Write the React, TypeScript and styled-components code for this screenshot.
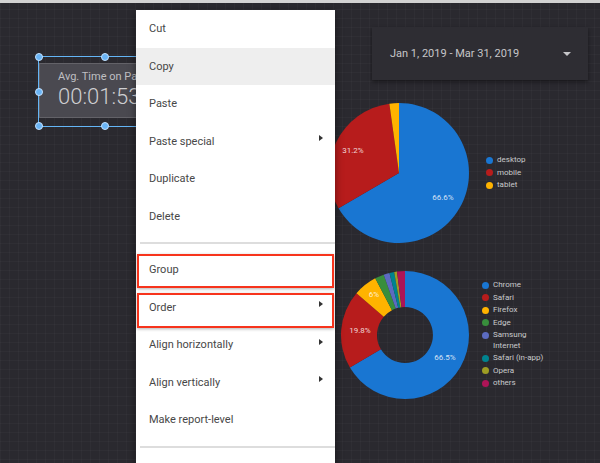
import styled, { createGlobalStyle } from "styled-components";

const GlobalStyle = createGlobalStyle`
  html, body {
    margin: 0;
    padding: 0;
    background: #2a292f;
  }
  body {
    font-family: Roboto, "Liberation Sans", Arial, sans-serif;
  }
  * {
    box-sizing: border-box;
  }
`;

type Slice = { label: string; value: number; color: string };
type ChartLabel = { text: string; x: number; y: number };

const devices: Slice[] = [
  { label: "desktop", value: 66.6, color: "#1976d2" },
  { label: "mobile", value: 31.2, color: "#b71c1c" },
  { label: "tablet", value: 2.2, color: "#ffb300" },
];

const browsers: Slice[] = [
  { label: "Chrome", value: 66.5, color: "#1976d2" },
  { label: "Safari", value: 19.8, color: "#b71c1c" },
  { label: "Firefox", value: 6, color: "#ffb300" },
  { label: "Edge", value: 2.3, color: "#388e3c" },
  { label: "Samsung\nInternet", value: 1.5, color: "#5c6bc0" },
  { label: "Safari (in-app)", value: 1.2, color: "#00838f" },
  { label: "Opera", value: 0.7, color: "#9e9d24" },
  { label: "others", value: 2.0, color: "#ad1457" },
];

const menuItems = [
  { label: "Cut" },
  { label: "Copy", active: true },
  { label: "Paste" },
  { label: "Paste special", sub: true },
  { label: "Duplicate" },
  { label: "Delete" },
  { divider: true },
  { label: "Group", mark: [3, 1] },
  { label: "Order", sub: true, mark: [4, -2] },
  { label: "Align horizontally", sub: true },
  { label: "Align vertically", sub: true },
  { label: "Make report-level" },
  { divider: true },
  { label: "" },
];

const Page = styled.div`
  position: relative;
  width: 600px;
  height: 463px;
  overflow: hidden;
  background-color: #2a292f;
  background-image: linear-gradient(rgba(255, 255, 255, 0.025) 1px, transparent 1px),
    linear-gradient(90deg, rgba(255, 255, 255, 0.025) 1px, transparent 1px);
  background-size: 9px 9px;
`;

const TopStrip = styled.div`
  height: 3px;
  background: #d3d3d3;
`;

/* report widgets sit on the free canvas */
const Selection = styled.div`
  position: absolute;
  left: 38px;
  top: 56px;
  width: 134px;
  height: 71px;
  border: 1px solid #64b5f6;
  padding: 6px 0 8px 0;
`;

const Handle = styled.span<{ $x: string; $y: string }>`
  position: absolute;
  left: ${(p) => p.$x};
  top: ${(p) => p.$y};
  width: 8px;
  height: 8px;
  margin: -4px 0 0 -4px;
  border-radius: 50%;
  background: #6ab4f5;
  border: 1px solid #c4e2ff;
`;

const Scorecard = styled.div`
  height: 100%;
  background: #4a4950;
  border: 1px solid rgba(255, 255, 255, 0.14);
  padding: 6px 0 0 18px;
  overflow: hidden;
  white-space: nowrap;
`;

const ScoreTitle = styled.div`
  font-size: 11px;
  line-height: 14px;
  color: #bfbfc2;
`;

const ScoreValue = styled.div`
  font-size: 22px;
  line-height: 26px;
  font-weight: 300;
  color: #cfcfd2;
`;

const DateControl = styled.div`
  position: absolute;
  left: 372px;
  top: 27px;
  width: 216px;
  height: 53px;
  background: #2e2d33;
  box-shadow: 0 2px 4px rgba(0, 0, 0, 0.45);
  display: flex;
  align-items: center;
  justify-content: space-between;
  padding: 0 17px 0 18px;
  font-size: 11px;
  color: #c6c6c9;
`;

const Caret = styled.span`
  width: 0;
  height: 0;
  border-left: 4px solid transparent;
  border-right: 4px solid transparent;
  border-top: 4px solid #c6c6c9;
`;

const ChartWidget = styled.div<{ $x: number; $y: number; $gap: number }>`
  position: absolute;
  left: ${(p) => p.$x}px;
  top: ${(p) => p.$y}px;
  display: flex;
  align-items: flex-start;
  gap: ${(p) => p.$gap}px;
`;

const Legend = styled.ul<{ $top: number }>`
  list-style: none;
  margin: ${(p) => p.$top}px 0 0 0;
  padding: 0;
  display: flex;
  flex-direction: column;
  gap: 2px;
`;

const LegendRow = styled.li`
  display: flex;
  align-items: flex-start;
  gap: 4px;
  font-size: 8px;
  line-height: 10.5px;
  color: #c9c9cc;
  white-space: pre-line;
`;

const Dot = styled.span<{ $color: string }>`
  flex: none;
  width: 7px;
  height: 7px;
  margin-top: 1.75px;
  border-radius: 50%;
  background: ${(p) => p.$color};
`;

const Menu = styled.div`
  position: absolute;
  left: 136px;
  top: 10px;
  width: 199px;
  bottom: -20px;
  background: #fff;
  box-shadow: 0 2px 8px rgba(0, 0, 0, 0.45);
  display: flex;
  flex-direction: column;
`;

const MenuItem = styled.div<{ $active?: boolean; $mark?: number[] }>`
  position: relative;
  flex: none;
  height: 37.5px;
  display: flex;
  align-items: center;
  padding: 0 12px 0 13px;
  font-size: 11px;
  color: #474747;
  background: ${(p) => (p.$active ? "#eeeeee" : "transparent")};

  &::after {
    content: "";
    display: ${(p) => (p.$mark ? "block" : "none")};
    position: absolute;
    left: 1px;
    right: 1px;
    top: ${(p) => (p.$mark ? p.$mark[0] : 0)}px;
    bottom: ${(p) => (p.$mark ? p.$mark[1] : 0)}px;
    border: 2px solid #f7341c;
    box-shadow: 0 1px 3px rgba(0, 0, 0, 0.3);
  }
`;

const SubArrow = styled.span`
  margin: -6px 0 0 auto;
  width: 0;
  height: 0;
  border-top: 3px solid transparent;
  border-bottom: 3px solid transparent;
  border-left: 4px solid #333;
`;

const MenuDivider = styled.div`
  flex: none;
  height: 16px;
  display: flex;
  align-items: center;
  padding-left: 4px;

  &::before {
    content: "";
    flex: 1;
    height: 2px;
    background: #dddddd;
  }
`;

function point(cx: number, cy: number, r: number, t: number) {
  const a = t * Math.PI * 2;
  return [cx + r * Math.sin(a), cy - r * Math.cos(a)];
}

function slicePath(c: number, r: number, r0: number, t0: number, t1: number) {
  const large = t1 - t0 > 0.5 ? 1 : 0;
  const [x0, y0] = point(c, c, r, t0);
  const [x1, y1] = point(c, c, r, t1);
  if (!r0) {
    return `M${c} ${c} L${x0} ${y0} A${r} ${r} 0 ${large} 1 ${x1} ${y1} Z`;
  }
  const [ix1, iy1] = point(c, c, r0, t1);
  const [ix0, iy0] = point(c, c, r0, t0);
  return `M${x0} ${y0} A${r} ${r} 0 ${large} 1 ${x1} ${y1} L${ix1} ${iy1} A${r0} ${r0} 0 ${large} 0 ${ix0} ${iy0} Z`;
}

function Pie({ size, hole, slices, labels }: { size: number; hole: number; slices: Slice[]; labels: ChartLabel[] }) {
  const c = size / 2;
  let t = 0;
  return (
    <svg width={size} height={size} viewBox={`0 0 ${size} ${size}`}>
      {slices.map((s) => {
        const t0 = t;
        t += s.value / 100;
        return <path key={s.label} d={slicePath(c, c, hole, t0, t)} fill={s.color} />;
      })}
      {labels.map((l) => (
        <text
          key={l.text}
          x={l.x}
          y={l.y}
          textAnchor="middle"
          dominantBaseline="middle"
          fontSize="8"
          fontFamily="Roboto, sans-serif"
          fill="rgba(255,255,255,0.82)"
        >
          {l.text}
        </text>
      ))}
    </svg>
  );
}

function ChartLegend({ slices, top }: { slices: Slice[]; top: number }) {
  return (
    <Legend $top={top}>
      {slices.map((s) => (
        <LegendRow key={s.label}>
          <Dot $color={s.color} />
          {s.label}
        </LegendRow>
      ))}
    </Legend>
  );
}

export default function App() {
  return (
    <>
      <GlobalStyle />
      <Page>
        <TopStrip />

        <Selection>
          <Scorecard>
            <ScoreTitle>Avg. Time on Page</ScoreTitle>
            <ScoreValue>00:01:53</ScoreValue>
          </Scorecard>
          <Handle $x="0%" $y="0%" />
          <Handle $x="50%" $y="0%" />
          <Handle $x="0%" $y="50%" />
          <Handle $x="0%" $y="100%" />
          <Handle $x="50%" $y="100%" />
        </Selection>

        <DateControl>
          <span>Jan 1, 2019 - Mar 31, 2019</span>
          <Caret />
        </DateControl>

        <ChartWidget $x={329} $y={103} $gap={17}>
          <Pie
            size={140}
            hole={0}
            slices={devices}
            labels={[
              { text: "31.2%", x: 24, y: 48 },
              { text: "66.6%", x: 114, y: 95 },
            ]}
          />
          <ChartLegend slices={devices} top={52} />
        </ChartWidget>

        <ChartWidget $x={341} $y={271} $gap={13}>
          <Pie
            size={128}
            hole={28}
            slices={browsers}
            labels={[
              { text: "6%", x: 33, y: 24 },
              { text: "19.8%", x: 19, y: 60 },
              { text: "66.5%", x: 104, y: 87 },
            ]}
          />
          <ChartLegend slices={browsers} top={9} />
        </ChartWidget>

        <Menu>
          {menuItems.map((m, i) =>
            m.divider ? (
              <MenuDivider key={i} />
            ) : (
              <MenuItem key={i} $active={m.active} $mark={m.mark}>
                {m.label}
                {m.sub && <SubArrow />}
              </MenuItem>
            )
          )}
        </Menu>
      </Page>
    </>
  );
}
